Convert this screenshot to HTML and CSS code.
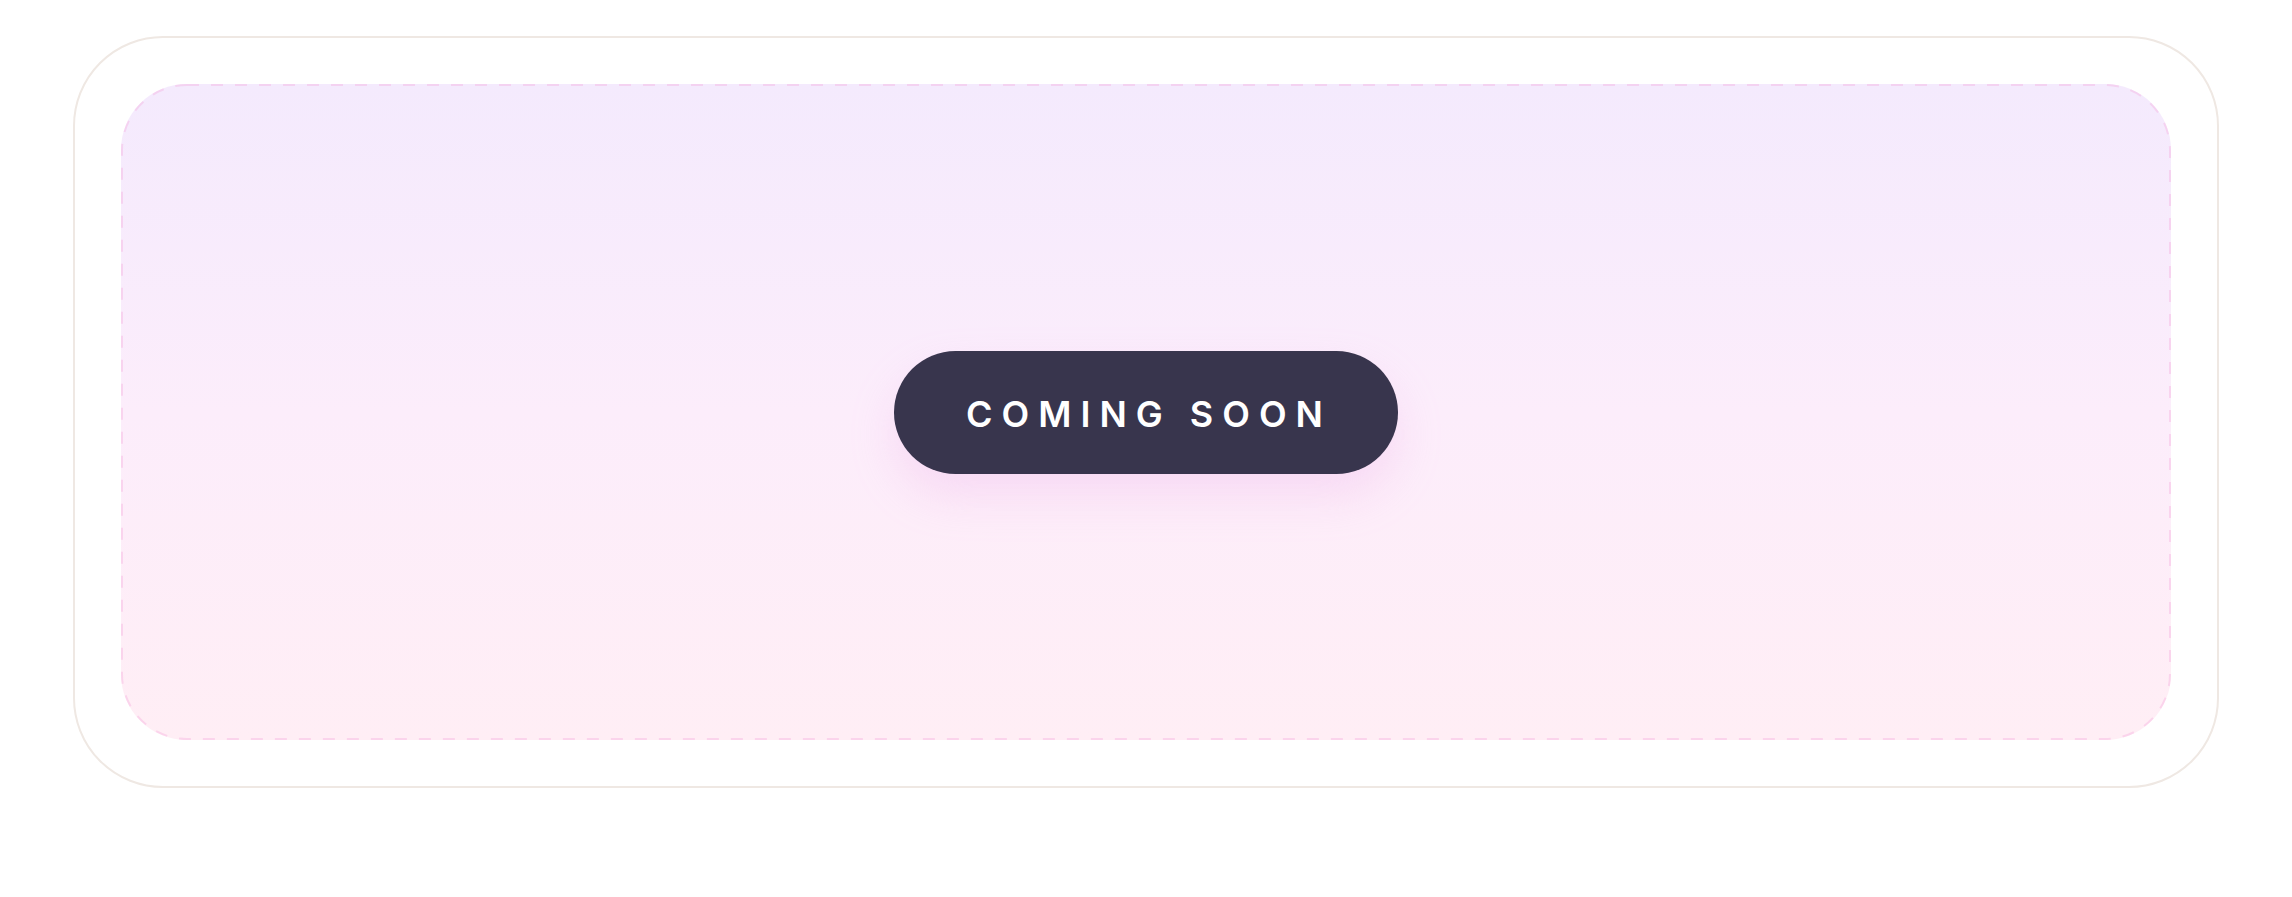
FILE: index.html
```html
<!DOCTYPE html>
<html lang="en">
<head>
<meta charset="UTF-8" />
<meta name="viewport" content="width=device-width, initial-scale=1" />
<title>Coming Soon</title>
<link rel="stylesheet" href="styles.css">
</head>
<body>

<main class="page">
  <section class="card">
    <div class="placeholder">
      <!-- dashed outline, drawn in svg so the dash length can be set -->
      <svg class="placeholder-outline" aria-hidden="true">
        <rect x="0" y="0" width="100%" height="100%" rx="65" ry="65" />
      </svg>
      <span class="badge">Coming Soon</span>
    </div>
  </section>
</main>

</body>
</html>
```

FILE: styles.css
```css
* {
  box-sizing: border-box;
}
body {
  margin: 0;
  background: #ffffff;
  font-family: 'Inter', 'Liberation Sans', Arial, sans-serif;
}
.page {
  padding: 36px 73px;
}
.card {
  background: #ffffff;
  border: 2px solid #efe8e3;
  border-radius: 90px;
  padding: 46px;
}
.placeholder {
  position: relative;
  height: 656px;
  border-radius: 66px;
  background: linear-gradient(180deg, #f4eafd 0%, #fcedfb 50%, #ffeef5 100%);
  display: flex;
  align-items: center;
  justify-content: center;
}
.placeholder-outline {
  position: absolute;
  top: 1px;
  left: 1px;
  width: calc(100% - 2px);
  height: calc(100% - 2px);
  overflow: visible;
  pointer-events: none;
}
.placeholder-outline rect {
  fill: none;
  stroke: rgba(244, 172, 220, 0.38);
  stroke-width: 2;
  stroke-dasharray: 12 12;
}

/* Dark pill label in the middle */
.badge {
  position: relative;
  display: inline-flex;
  align-items: center;
  justify-content: center;
  height: 123px;
  padding: 4px 66px 0 72px;
  border-radius: 999px;
  background: #38354d;
  color: #ffffff;
  font-size: 36px;
  font-weight: 600;
  text-transform: uppercase;
  letter-spacing: 0.25em;
  box-shadow: 0 22px 44px rgba(236, 170, 230, 0.28);
}
```
